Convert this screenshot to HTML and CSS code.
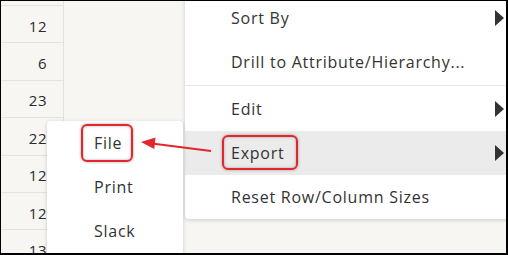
FILE: index.html
```html
<!DOCTYPE html>
<html lang="en">
<head>
    <meta charset="UTF-8">
    <title>Export menu</title>
    <link rel="stylesheet" href="styles.css">
</head>
<body>
    <div class="frame">
        <div class="sheet">
            <div class="num-col">
                <div class="cell">12</div>
                <div class="cell">6</div>
                <div class="cell">23</div>
                <div class="cell">22</div>
                <div class="cell">12</div>
                <div class="cell">12</div>
                <div class="cell">13</div>
            </div>
        </div>

        <ul class="menu main-menu">
            <li class="item">Sort By <span class="caret"></span></li>
            <li class="item">Drill to Attribute/Hierarchy...</li>
            <li class="sep"></li>
            <li class="item">Edit <span class="caret"></span></li>
            <li class="item active"><span class="mark mark-export">Export</span> <span class="caret"></span></li>
            <li class="item">Reset Row/Column Sizes</li>
        </ul>

        <ul class="menu sub-menu">
            <li class="item"><span class="mark mark-file">File</span></li>
            <li class="item">Print</li>
            <li class="item">Slack</li>
        </ul>

        <svg class="pointer" width="508" height="255" viewBox="0 0 508 255">
            <line x1="152" y1="143.5" x2="211" y2="151" stroke="#e3262b" stroke-width="2"/>
            <polygon points="141,142 155.5,137.5 154.3,149" fill="#e3262b"/>
        </svg>
    </div>
</body>
</html>
```
FILE: styles.css
```css
* {
    box-sizing: border-box;
}

body {
    margin: 0;
    font-family: "Open Sans", Arial, sans-serif;
    color: #333;
}

.frame {
    position: relative;
    width: 508px;
    height: 255px;
    border: solid #000;
    border-width: 1px 2px 2px 1px;
    background: #f7f6f2;
    overflow: hidden;
}

.sheet {
    height: 100%;
}

.num-col {
    width: 63px;
    height: 100%;
    border-right: 1px solid #e4e2dc;
    padding-top: 4px;
}

.cell {
    height: 37.4px;
    border-top: 1px solid #e4e2dc;
    padding-right: 16px;
    display: flex;
    align-items: center;
    justify-content: flex-end;
    padding-top: 3px;
    font-size: 15px;
    letter-spacing: 0.5px;
    color: #2b2b2b;
}

.menu {
    position: absolute;
    margin: 0;
    padding: 0;
    list-style: none;
    background: #fff;
    border-radius: 4px;
    box-shadow: 0 1px 4px rgba(0, 0, 0, 0.18);
    font-size: 16px;
    letter-spacing: 0.75px;
}

.main-menu {
    left: 184px;
    top: -6px;
    width: 340px;
    padding-top: 1px;
}

.sub-menu {
    left: 46px;
    top: 120px;
    width: 136px;
    height: 150px;
}

.item {
    height: 44px;
    display: flex;
    align-items: center;
    justify-content: space-between;
    padding-left: 46px;
    padding-right: 21px;
}

.sub-menu .item {
    padding-left: 47px;
}

.item.active {
    background: #ebebeb;
}

.sep {
    height: 1px;
    margin: 1px 0;
    background: #e6e6e6;
}

.caret {
    width: 0;
    height: 0;
    border-left: 9px solid #333;
    border-top: 8px solid transparent;
    border-bottom: 8px solid transparent;
}

.mark {
    position: relative;
}

.mark::after {
    content: "";
    position: absolute;
    border: 2px solid #e3262b;
    border-radius: 6px;
    box-shadow: 0 0 3px rgba(0, 0, 0, 0.35), inset 0 0 3px rgba(0, 0, 0, 0.3);
}

.mark-export::after {
    left: -9px;
    right: -14px;
    top: -7px;
    bottom: -6px;
}

.mark-file::after {
    left: -13px;
    right: -11px;
    top: -8px;
    bottom: -8px;
}

.pointer {
    position: absolute;
    left: -1px;
    top: -1px;
}
```
